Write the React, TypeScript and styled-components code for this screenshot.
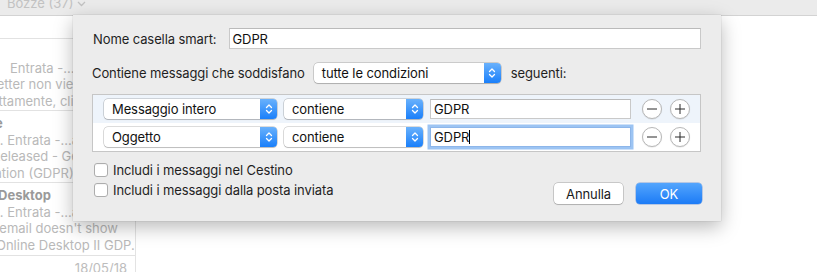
import React from "react";
import styled, { createGlobalStyle } from "styled-components";

const Global = createGlobalStyle`
  html, body { margin: 0; padding: 0; background: #fff; }
  body { font-family: Inter, "Liberation Sans", Arial, sans-serif; -webkit-font-smoothing: antialiased; }
`;

const Screen = styled.div`
  position: relative;
  width: 817px;
  height: 272px;
  overflow: hidden;
  background: #fff;
  display: flex;
  flex-direction: column;
`;

const TopBar = styled.div`
  flex: none;
  height: 16px;
  box-sizing: border-box;
  background: #ebebeb;
  border-bottom: 1px solid #d3d3d3;
  overflow: hidden;
  display: flex;
  align-items: flex-start;
  padding-left: 7px;
  gap: 4px;
`;

const TopTitle = styled.span`
  font-size: 13px;
  line-height: 15px;
  margin-top: -4px;
  color: #c2c2c2;
`;

const Body = styled.div`
  flex: 1;
  display: flex;
  min-height: 0;
`;

const ListPane = styled.div`
  width: 135px;
  flex: none;
  border-right: 1px solid #e3e3e3;
  overflow: hidden;
  white-space: nowrap;
`;

const ListItem = styled.div<{ $h: number }>`
  height: ${(p) => p.$h}px;
  box-sizing: border-box;
  border-bottom: 1px solid #e2e2e2;
  padding: 4px 8px 0 0;
  font-size: 13px;
  line-height: 16.5px;
  color: #b9b9b9;
`;

const SenderRow = styled.div`
  display: flex;
  justify-content: space-between;
  height: 16.5px;
`;

const Sender = styled.span<{ $indent: number }>`
  font-weight: 700;
  color: #9a9a9a;
  margin-left: ${(p) => p.$indent}px;
`;

const DateText = styled.span`
  color: #bdbdbd;
`;

const Line = styled.div<{ $indent: number }>`
  margin-left: ${(p) => p.$indent}px;
`;

const Sheet = styled.div`
  position: absolute;
  left: 73px;
  top: 15px;
  width: 648px;
  height: 206px;
  box-sizing: border-box;
  background: #ececec;
  box-shadow: 0 6px 18px rgba(0, 0, 0, 0.28), 0 0 1px rgba(0, 0, 0, 0.25);
  padding: 13px 20px 0 19px;
  display: flex;
  flex-direction: column;
  font-size: 13px;
  letter-spacing: -0.1px;
  color: #1f1f1f;
`;

const FieldRow = styled.div`
  display: flex;
  align-items: center;
  height: 21px;
  padding-left: 1px;
`;

const Label = styled.span`
  white-space: nowrap;
`;

const TextField = styled.div<{ $focused?: boolean }>`
  height: 21px;
  box-sizing: border-box;
  background: #fff;
  border: 1px solid #c9c9c9;
  border-top-color: #bababa;
  padding: 0 3px;
  display: flex;
  align-items: center;
  color: #111;
  ${(p) =>
    p.$focused
      ? `border-color: #8db6ea; box-shadow: 0 0 0 2.5px #9cc4f3;`
      : ``}
`;

const NameField = styled(TextField)`
  flex: 1;
  margin-left: 12px;
`;

const Caret = styled.span`
  display: inline-block;
  width: 1px;
  height: 14px;
  background: #000;
`;

const ConditionRow = styled.div`
  display: flex;
  align-items: center;
  height: 20px;
  margin-top: 14px;
`;

const PopupBox = styled.div<{ $w: number }>`
  width: ${(p) => p.$w}px;
  height: 20px;
  flex: none;
  box-sizing: border-box;
  display: flex;
  align-items: center;
  background: #fff;
  border-radius: 4px;
  box-shadow: 0 0 0 0.5px rgba(0, 0, 0, 0.28), 0 1px 1px rgba(0, 0, 0, 0.14);
  color: #111;
  padding-left: 8px;
  overflow: hidden;
`;

const PopupArrows = styled.span`
  margin-left: auto;
  width: 17px;
  height: 100%;
  flex: none;
  background: linear-gradient(#69b1fc, #1a7ffa);
  display: flex;
  align-items: center;
  justify-content: center;
`;

const ConditionPopup = styled(PopupBox)`
  margin: 0 10px 0 9px;
`;

const RuleBox = styled.div`
  margin-top: 11px;
  border: 1px solid #c6c6c6;
  background: #fff;
`;

const RuleRow = styled.div<{ $selected?: boolean }>`
  height: 28px;
  box-sizing: border-box;
  display: flex;
  align-items: center;
  gap: 7px;
  padding-left: 11px;
  background: ${(p) => (p.$selected ? "#eef4fb" : "#fff")};
`;

const ValueField = styled(TextField)`
  width: 201px;
  height: 20px;
`;

const CircleButtons = styled.div`
  display: flex;
  gap: 8px;
  margin-left: 4px;
`;

const Circle = styled.div`
  width: 20px;
  height: 20px;
  box-sizing: border-box;
  border-radius: 50%;
  background: #fff;
  border: 1px solid #b8b8b8;
  box-shadow: 0 0.5px 1px rgba(0, 0, 0, 0.12);
  display: flex;
  align-items: center;
  justify-content: center;
`;

const Footer = styled.div`
  display: flex;
  justify-content: space-between;
  margin-top: 11px;
`;

const CheckList = styled.div`
  display: flex;
  flex-direction: column;
  gap: 6px;
  padding-left: 2px;
`;

const CheckRow = styled.label`
  display: flex;
  align-items: center;
  gap: 5px;
  height: 14px;
  white-space: nowrap;
`;

const CheckBox = styled.span`
  width: 14px;
  height: 14px;
  box-sizing: border-box;
  border-radius: 3px;
  background: #fff;
  border: 1px solid #adadad;
  box-shadow: inset 0 1px 0 rgba(0, 0, 0, 0.03);
`;

const Buttons = styled.div`
  display: flex;
  gap: 13px;
  margin-top: 20px;
  margin-right: -1px;
`;

const Button = styled.div<{ $primary?: boolean; $w: number }>`
  width: ${(p) => p.$w}px;
  height: 21px;
  box-sizing: border-box;
  border-radius: 4px;
  display: flex;
  align-items: center;
  justify-content: center;
  ${(p) =>
    p.$primary
      ? `background: linear-gradient(#53a5fd, #1c7bf6); color: #fff; box-shadow: 0 0 0 0.5px rgba(20,90,200,.5);`
      : `background: #fff; color: #1a1a1a; box-shadow: 0 0 0 0.5px rgba(0,0,0,.3), 0 1px 1px rgba(0,0,0,.12);`}
`;

const Arrows = () => (
  <svg width="8" height="12" viewBox="0 0 8 12">
    <path d="M1.5 4.5 L4 2 L6.5 4.5 M1.5 7.5 L4 10 L6.5 7.5" fill="none" stroke="#fff" strokeWidth="1.3" strokeLinecap="round" strokeLinejoin="round" />
  </svg>
);

const Popup = ({ w, label }: { w: number; label: string }) => (
  <PopupBox $w={w}>
    {label}
    <PopupArrows>
      <Arrows />
    </PopupArrows>
  </PopupBox>
);

const Minus = () => (
  <Circle>
    <svg width="12" height="12" viewBox="0 0 12 12">
      <path d="M1 6 H11" stroke="#2a2a2a" strokeWidth="1" />
    </svg>
  </Circle>
);

const Plus = () => (
  <Circle>
    <svg width="12" height="12" viewBox="0 0 12 12">
      <path d="M1 6 H11 M6 1 V11" stroke="#2a2a2a" strokeWidth="1" />
    </svg>
  </Circle>
);

const Chevron = () => (
  <svg width="9" height="6" viewBox="0 0 9 6" style={{ marginTop: 1 }}>
    <path d="M1 1 L4.5 4.5 L8 1" fill="none" stroke="#c2c2c2" strokeWidth="1.3" />
  </svg>
);

type Item = {
  h: number;
  sender?: { text: string; indent: number };
  date?: string;
  lines: { text: string; indent: number }[];
};

const items: Item[] = [
  { h: 23, lines: [] },
  {
    h: 72,
    lines: [
      { text: "Entrata -...axel", indent: 10 },
      { text: "Newsletter non viene", indent: -41 },
      { text: "correttamente, clicca", indent: -34 },
    ],
  },
  {
    h: 72,
    sender: { text: "Office", indent: -36 },
    lines: [
      { text: "15 . Entrata -...axel", indent: -17 },
      { text: "Released - General", indent: -8 },
      { text: "Regulation (GDPR) is", indent: -40 },
    ],
  },
  {
    h: 73,
    sender: { text: "Online Desktop", indent: -46 },
    lines: [
      { text: "15 . Entrata -...axel", indent: -17 },
      { text: "The email doesn't show", indent: -28 },
      { text: "Online Desktop II GDP...", indent: -4 },
    ],
  },
  { h: 40, date: "18/05/18", lines: [] },
];

export default function App() {
  return (
    <>
      <Global />
      <Screen>
        <TopBar>
          <TopTitle>Bozze (37)</TopTitle>
          <Chevron />
        </TopBar>
        <Body>
          <ListPane>
            {items.map((it, i) => (
              <ListItem key={i} $h={it.h}>
                {(it.sender || it.date) && (
                  <SenderRow>
                    {it.sender ? <Sender $indent={it.sender.indent}>{it.sender.text}</Sender> : <span />}
                    {it.date && <DateText>{it.date}</DateText>}
                  </SenderRow>
                )}
                {i === 1 && <SenderRow />}
                {it.lines.map((l, j) => (
                  <Line key={j} $indent={l.indent}>
                    {l.text}
                  </Line>
                ))}
              </ListItem>
            ))}
          </ListPane>
        </Body>

        <Sheet>
          <FieldRow>
            <Label>Nome casella smart:</Label>
            <NameField>GDPR</NameField>
          </FieldRow>

          <ConditionRow>
            <Label>Contiene messaggi che soddisfano</Label>
            <ConditionPopup $w={187}>
              tutte le condizioni
              <PopupArrows>
                <Arrows />
              </PopupArrows>
            </ConditionPopup>
            <Label>seguenti:</Label>
          </ConditionRow>

          <RuleBox>
            <RuleRow $selected>
              <Popup w={173} label="Messaggio intero" />
              <Popup w={139} label="contiene" />
              <ValueField>GDPR</ValueField>
              <CircleButtons>
                <Minus />
                <Plus />
              </CircleButtons>
            </RuleRow>
            <RuleRow>
              <Popup w={173} label="Oggetto" />
              <Popup w={139} label="contiene" />
              <ValueField $focused>
                GDPR
                <Caret />
              </ValueField>
              <CircleButtons>
                <Minus />
                <Plus />
              </CircleButtons>
            </RuleRow>
          </RuleBox>

          <Footer>
            <CheckList>
              <CheckRow>
                <CheckBox />
                Includi i messaggi nel Cestino
              </CheckRow>
              <CheckRow>
                <CheckBox />
                Includi i messaggi dalla posta inviata
              </CheckRow>
            </CheckList>
            <Buttons>
              <Button $w={69}>Annulla</Button>
              <Button $w={66} $primary>
                OK
              </Button>
            </Buttons>
          </Footer>
        </Sheet>
      </Screen>
    </>
  );
}
